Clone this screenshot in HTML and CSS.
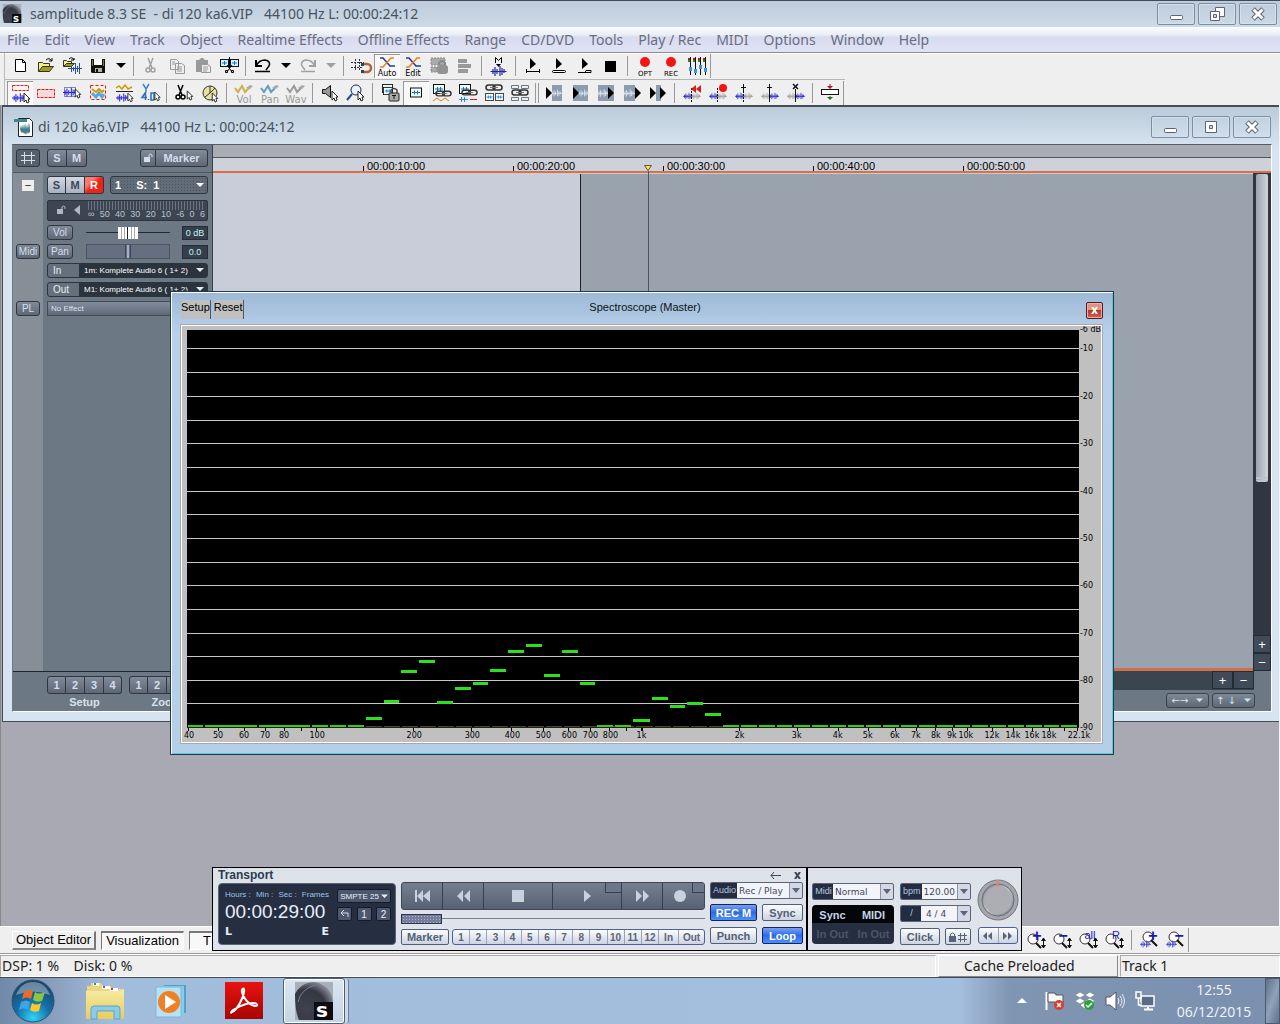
FILE: index.html
```html
<!DOCTYPE html>
<html lang="en">
<head>
<meta charset="utf-8">
<meta name="viewport" content="width=device-width, initial-scale=1">
<title>samplitude 8.3 SE</title>
<link rel="stylesheet" href="styles.css">
</head>
<body>
<svg class="defs" aria-hidden="true">
  <defs>
    <linearGradient id="g-red" x1="0" y1="0" x2="0" y2="1"><stop offset="0" stop-color="#e8130f"/><stop offset="1" stop-color="#a80503"/></linearGradient>
    <radialGradient id="g-orb" cx=".5" cy=".9" r=".9"><stop offset="0" stop-color="#2fd4f7"/><stop offset=".45" stop-color="#1470a8"/><stop offset="1" stop-color="#1c3f63"/></radialGradient>
    <linearGradient id="g-fold" x1="0" y1="0" x2="0" y2="1"><stop offset="0" stop-color="#f7eca6"/><stop offset="1" stop-color="#e8cc5c"/></linearGradient>
    <radialGradient id="g-sam" cx=".3" cy=".7" r=".85"><stop offset="0" stop-color="#3d424e"/><stop offset=".6" stop-color="#343843"/><stop offset=".9" stop-color="#8b909c"/><stop offset="1" stop-color="#e0e3e8"/></radialGradient>
    <linearGradient id="g-knob" x1="0" y1="0" x2="1" y2="1"><stop offset="0" stop-color="#76777c"/><stop offset=".5" stop-color="#c7c8cc"/><stop offset="1" stop-color="#77787d"/></linearGradient>
  </defs>
  <symbol id="wave" viewBox="0 0 16 10"><path d="M0 5.500h16M2.500 3v5M4.500 1v9M6.500 3v5M9.500 0v10M11.500 2v7M13.500 3v4" fill="none" stroke="currentColor" stroke-width="1.200"/></symbol>
  <symbol id="cursor" viewBox="0 0 8 12"><path d="M1 1v9l2-2 1 3 2-1-1-3h2z" fill="#fff" stroke="#222"/></symbol>
  <symbol id="chain" viewBox="0 0 18 8"><g fill="none" stroke="#333" stroke-width="1.500"><rect x="1" y="1" width="9" height="5" rx="2.500"/><rect x="8" y="1" width="9" height="5" rx="2.500"/></g><path d="M5 3.500h8" stroke="#777"/></symbol>
  <symbol id="box" viewBox="0 0 12 10"><rect x=".5" y=".5" width="11" height="9" fill="#eefcff" stroke="#111"/><path d="M2 5h8M4.500 3v4M7.500 3v4" stroke="#1672c8"/></symbol>
  <symbol id="caret" viewBox="0 0 10 6"><path d="M0 0h10L5 5z" fill="currentColor"/></symbol>

  <symbol id="i-new" viewBox="0 0 24 22"><path d="M7.500 4.500h7l3 3v9h-10zM14.500 4.500v3h3" fill="#fff" stroke="#000"/></symbol>
  <symbol id="i-open" viewBox="0 0 24 22"><path d="M4.500 16.500v-9h4l1 1h6v3" fill="#f6f08a" stroke="#332"/><path d="M4.500 16.500l4-5h11l-4 5z" fill="#a29b1c" stroke="#332"/><path d="M12 5q3-3 6 1m0-3v3h-3" fill="none" stroke="#000"/></symbol>
  <symbol id="i-import" viewBox="0 0 24 22"><path d="M3.500 11.500v-6h3l1 1h4v2" fill="#f6f08a" stroke="#332"/><path d="M3.500 11.500l3-3h8l-3 3z" fill="#a29b1c" stroke="#332"/><path d="M9 4q3-3 5 1m0-2v2h-3" fill="none" stroke="#000"/><path d="M8 13.500h14M11.500 11v6M13.500 12v4M15.500 8v11M17.500 11v6M19.500 8v11" stroke="#2650a8"/></symbol>
  <symbol id="i-save" viewBox="0 0 24 22"><path d="M5 4h14v14H6l-1-1z" fill="#111"/><path d="M6 5h1v6H6zM17 5h1v6h-1z" fill="#7d7d32"/><path d="M8 4h8v6H8z" fill="#fff"/><path d="M9 13h7v4H9z" fill="#b4b4a0"/><path d="M10 14h2v3h-2z" fill="#111"/></symbol>
  <symbol id="i-cut" viewBox="0 0 24 22"><path d="M9 3l4 10M14 3l-4 10" stroke="currentColor" stroke-width="1.500"/><g fill="none" stroke="currentColor" stroke-width="1.500"><circle cx="9" cy="15" r="2"/><circle cx="14" cy="15" r="2"/></g></symbol>
  <symbol id="i-copy" viewBox="0 0 24 22"><path d="M5.500 4.500h6l2 2v8h-8zM10.500 8.500h6l3 2v8h-9z" fill="#eee" stroke="#999"/><path d="M7 7h3M7 9h3M12 12h5M12 14h5M12 16h5" stroke="#999"/></symbol>
  <symbol id="i-paste" viewBox="0 0 24 22"><path d="M5 5h3l2-2h2l2 2h3v5H5v6z" fill="#999"/><path d="M5 5h6v12H5z" fill="#999"/><path d="M10.500 9.500h6l3 2v6h-9z" fill="#eee" stroke="#999"/><path d="M12 12h5M12 14h5M12 16h4" stroke="#999"/></symbol>
  <symbol id="i-cutobj" viewBox="0 0 24 22"><rect x="3.500" y="4.500" width="8" height="7" fill="#d5f4ff" stroke="#111"/><rect x="13.500" y="4.500" width="8" height="7" fill="#d5f4ff" stroke="#111"/><path d="M5 8h5M7.500 6v4M15 8h5M17.500 6v4" stroke="#1672c8"/><path d="M12.500 2v12M10 10l5 7M15 10l-5 7" stroke="#000"/><path d="M8.500 15.500h2v2h-2zM14.500 15.500h2v2h-2z" fill="none" stroke="#000"/></symbol>
  <symbol id="i-undo" viewBox="0 0 24 22"><path d="M5 5v6h6" fill="none" stroke="currentColor" stroke-width="2"/><path d="M5 11Q8 5 14 5q6 1 4 6l-3 4M4 16.500h15" fill="none" stroke="currentColor" stroke-width="1.500"/></symbol>
  <symbol id="i-redo" viewBox="0 0 24 22"><path d="M19 5v6h-6" fill="none" stroke="currentColor" stroke-width="2"/><path d="M19 11Q16 5 10 5q-6 1-4 6l3 4M5 16.500h14" fill="none" stroke="currentColor" stroke-width="1.500"/></symbol>
  <symbol id="i-grid" viewBox="0 0 24 22"><path d="M6.500 4v12M10.500 4v12M2 7.500h13M2 12.500h11" stroke="#333" stroke-dasharray="2 1"/><path d="M13 9h5a3.500 3.500 0 010 8h-5" fill="none" stroke="#b0633c" stroke-width="2.500"/><path d="M12 8h3v3h-3zM12 15h3v3h-3z" fill="#246"/></symbol>
  <symbol id="i-x" viewBox="0 0 24 22"><path d="M5 3h3l7 8h5" fill="none" stroke="#26389a" stroke-width="1.500"/><path d="M5 12h3l8-9h3" fill="none" stroke="#e8821e" stroke-width="1.500"/></symbol>
  <symbol id="i-lockobj" viewBox="0 0 24 22"><path d="M4 3h14v7H4zM4 12h6v5H4z" fill="#aaa" stroke="#888" stroke-dasharray="2 1"/><rect x="10" y="10" width="11" height="9" rx="3" fill="#929292"/><path d="M12 10V8q3-4 6 0v2" fill="none" stroke="#888" stroke-width="2"/></symbol>
  <symbol id="i-list" viewBox="0 0 24 22"><path d="M5 4h9v4H5zM5 9h13v4H5zM5 14h10v4H5z" fill="#999"/></symbol>
  <symbol id="i-m" viewBox="0 0 24 22"><path d="M8.500 8V2.500l3 3 3-3V8" fill="none" stroke="#000"/><path d="M9 9h5l-2.500 3z" fill="#000"/><use href="#wave" x="3" y="11" width="17" height="10" color="#2525a0"/></symbol>
  <symbol id="i-play1" viewBox="0 0 24 22"><path d="M9 3v11l6-5z"/><path d="M5 16.500h14M5.500 14v4M18.500 14v4" stroke="#000"/></symbol>
  <symbol id="i-play2" viewBox="0 0 24 22"><path d="M9 3v11l6-5z"/><rect x="5.500" y="15.500" width="13" height="2" rx="1" fill="#fff" stroke="#000"/></symbol>
  <symbol id="i-play3" viewBox="0 0 24 22"><path d="M9 3v11l6-5z"/><path d="M5 17.500h7l1-2h5v2h-6" fill="none" stroke="#000"/></symbol>
  <symbol id="i-stop" viewBox="0 0 24 22"><path d="M6 6h11v11H6z"/></symbol>
  <symbol id="i-dot" viewBox="0 0 24 22"><circle cx="12" cy="7" r="5" fill="#f41414"/></symbol>
  <symbol id="i-mixer" viewBox="0 0 24 22"><g stroke-width="2"><path d="M3 4h18" stroke="#b81818" stroke-dasharray="3 2"/><path d="M3 6h18" stroke="#178c1c" stroke-dasharray="3 2"/></g><path d="M5.500 2v18M10.500 2v18M15.500 2v18M20.500 2v18" stroke="#111"/><path d="M4 12h3v4H4zM9 14h3v4H9zM14 10h3v4h-3zM19 13h3v4h-3z" fill="#3c94e0"/></symbol>

  <symbol id="i-r1" viewBox="0 0 24 22"><path d="M4.500 3.500h16v5h-16z" fill="#fff0f0" stroke="#d81c1c" stroke-dasharray="3 1"/><use href="#wave" x="4" y="11" width="14" height="9" color="#2424e0"/><use href="#cursor" x="15" y="10" width="8" height="12"/></symbol>
  <symbol id="i-r2" viewBox="0 0 24 22"><path d="M3.500 7.500h17v8h-17z" fill="#f6dada" stroke="#d81c1c" stroke-dasharray="3 1"/></symbol>
  <symbol id="i-r3" viewBox="0 0 24 22"><rect x="4.500" y="5.500" width="11" height="9" fill="#f4f4ff" stroke="#88a"/><use href="#wave" x="3" y="5" width="14" height="10" color="#2424e0"/><use href="#cursor" x="14" y="6" width="8" height="11"/></symbol>
  <symbol id="i-r4" viewBox="0 0 24 22"><path d="M4.500 3.500h15v14h-15z" fill="#f8eeee" stroke="#d81c1c" stroke-dasharray="3 2"/><path d="M6 7l4 3 3-3 3 3 2-2" fill="none" stroke="#c8a000" stroke-width="2"/><path d="M6 11l4 4 3-4 3 4 2-3" fill="none" stroke="#58a8d8" stroke-width="3"/></symbol>
  <symbol id="i-r5" viewBox="0 0 24 22"><path d="M4 6l3-2 3 3 3-4 3 4 4-2" fill="none" stroke="#c8a000" stroke-width="1.500"/><path d="M4 9.500h17" stroke="#222"/><use href="#wave" x="4" y="11" width="13" height="9" color="#2424e0"/><use href="#cursor" x="15" y="10" width="7" height="11"/></symbol>
  <symbol id="i-r6" viewBox="0 0 24 22"><path d="M5 2l3 5 3-5M8 7v3" fill="none" stroke="#3c84cc" stroke-width="1.500"/><path d="M7.500 10.500L4 15.500h5M7.500 10v8M13 11h3v7h-3zM10.500 17v1" fill="none" stroke="#2c6cb8" stroke-width="1.500"/><use href="#cursor" x="16" y="9" width="7" height="11"/></symbol>
  <symbol id="i-cutc" viewBox="0 0 24 22"><use href="#i-cut" x="-3" y="0" width="24" height="22"/><use href="#cursor" x="14" y="8" width="8" height="11"/></symbol>
  <symbol id="i-scrub" viewBox="0 0 24 22"><circle cx="12" cy="11" r="7" fill="#e6e39c" stroke="#333"/><path d="M12 4v7l-5 4M12 11l5-5" stroke="#333" fill="none"/><use href="#cursor" x="13" y="10" width="8" height="11"/></symbol>
  <symbol id="i-env" viewBox="0 0 24 22"><path d="M3 6l3 4 4-6 3 6 4-4" fill="none" stroke="currentColor" stroke-width="2"/><path d="M14 6l4-3 3 1-3 3z" fill="#aaa"/></symbol>
  <symbol id="i-spk" viewBox="0 0 24 22"><path d="M4.500 7.500h3l5-4v12l-5-4h-3z" fill="#999" stroke="#111"/><use href="#cursor" x="13" y="8" width="8" height="12"/></symbol>
  <symbol id="i-zoomc" viewBox="0 0 24 22"><circle cx="12" cy="8" r="5" fill="#e8f4ff" stroke="#225"/><path d="M8 12l-5 6" stroke="#224a9c" stroke-width="2"/><use href="#cursor" x="13" y="8" width="8" height="12"/></symbol>
  <symbol id="i-boxlock" viewBox="0 0 24 22"><use href="#box" x="3" y="2" width="13" height="9"/><use href="#box" x="5" y="5" width="10" height="8"/><rect x="11" y="11" width="10" height="8" rx="1" fill="#aaa" stroke="#222"/><path d="M13 11V8q3-3 6 0v3" fill="none" stroke="#444" stroke-width="1.500"/><path d="M14 13.500h4M16 13v4" stroke="#111"/></symbol>
  <symbol id="i-box" viewBox="0 0 24 22"><use href="#box" x="6" y="5" width="12" height="11"/></symbol>
  <symbol id="i-ch1" viewBox="0 0 24 22"><use href="#box" x="3" y="2" width="12" height="10"/><use href="#chain" x="5" y="8" width="17" height="8"/><path d="M3 19l4-3 4 3 4-3 4 3" fill="none" stroke="#e07818"/></symbol>
  <symbol id="i-ch2" viewBox="0 0 24 22"><use href="#box" x="3" y="2" width="12" height="10"/><use href="#chain" x="5" y="7" width="17" height="8"/><path d="M3 17.500h9M5.500 15v5M8.500 15v5" stroke="#2c84e0"/><path d="M14 17.500h7" stroke="#d81c1c"/></symbol>
  <symbol id="i-ch3" viewBox="0 0 24 22"><use href="#chain" x="3" y="2" width="18" height="8"/><use href="#box" x="3" y="11" width="9" height="8"/><use href="#box" x="13" y="11" width="9" height="8"/></symbol>
  <symbol id="i-ch4" viewBox="0 0 24 22"><g fill="none" stroke="#678"><path d="M3.500 3.500h7v3h-7zM13.500 3.500h7v3h-7zM3.500 15.500h7v3h-7zM13.500 15.500h7v3h-7z"/></g><use href="#chain" x="3" y="7" width="18" height="8"/></symbol>
  <symbol id="i-p1" viewBox="0 0 24 22"><path d="M10 3h10v16H10z" fill="#8c9cb0"/><use href="#wave" x="9" y="6" width="11" height="10" color="#dde6ee"/><path d="M4 5v12l6-6z"/></symbol>
  <symbol id="i-p2" viewBox="0 0 24 22"><path d="M5 3h15v16H5z" fill="#8c9cb0"/><use href="#wave" x="10" y="6" width="11" height="10" color="#dde6ee"/><path d="M5 5v12l6-6z"/></symbol>
  <symbol id="i-p3" viewBox="0 0 24 22"><path d="M4 3h16v16H4z" fill="#8c9cb0"/><use href="#wave" x="3" y="6" width="12" height="10" color="#dde6ee"/><path d="M14 5v12l6-6z"/></symbol>
  <symbol id="i-p4" viewBox="0 0 24 22"><path d="M4 3h11v16H4z" fill="#8c9cb0"/><use href="#wave" x="3" y="6" width="12" height="10" color="#dde6ee"/><path d="M15 5v12l6-6z"/></symbol>
  <symbol id="i-p5" viewBox="0 0 24 22"><path d="M10 3h5v16h-5z" fill="#8c9cb0"/><path d="M4 5v12l6-6zM14 5v12l6-6z"/></symbol>
  <symbol id="i-wv" viewBox="0 0 24 22"><use href="#wave" x="3" y="9" width="10" height="10" color="#1818d0"/><use href="#wave" x="11" y="9" width="10" height="10" color="#999"/><path d="M11.500 6v14" stroke="#111" stroke-dasharray="2 1"/></symbol>
  <symbol id="i-wv2" viewBox="0 0 24 22"><use href="#wave" x="3" y="9" width="10" height="10" color="#999"/><use href="#wave" x="11" y="9" width="10" height="10" color="#1818d0"/><path d="M11.500 7v13" stroke="#111"/></symbol>
  <symbol id="i-w1" viewBox="0 0 24 22"><use href="#i-wv" width="24" height="22"/><path d="M11 7l5-4v8zM16 7l5-4v8z" fill="#d81c1c"/></symbol>
  <symbol id="i-w2" viewBox="0 0 24 22"><use href="#i-wv" width="24" height="22"/><circle cx="17" cy="6" r="4" fill="#f41414"/></symbol>
  <symbol id="i-w3" viewBox="0 0 24 22"><use href="#i-wv" width="24" height="22"/><path d="M11.500 2v7M9 5.500h5" stroke="#111"/></symbol>
  <symbol id="i-w4" viewBox="0 0 24 22"><use href="#i-wv2" width="24" height="22"/><path d="M11.500 2v7M9 5.500h5" stroke="#111"/></symbol>
  <symbol id="i-w5" viewBox="0 0 24 22"><use href="#i-wv2" width="24" height="22"/><path d="M9 2l5 5M14 2l-5 5" stroke="#111" stroke-width="1.500"/></symbol>
  <symbol id="i-out" viewBox="0 0 24 22"><rect x="3.500" y="7.500" width="17" height="5" fill="#fff" stroke="#111"/><path d="M12 2v4" stroke="#c01818"/><path d="M9 4h6l-3 3z" fill="#c01818"/><path d="M12 14v3" stroke="#187818"/><path d="M9 15h6l-3 3z" fill="#187818"/></symbol>
  <symbol id="i-mag" viewBox="0 0 24 22"><circle cx="8" cy="10" r="5" fill="#fff" stroke="#333"/><path d="M11 14l5 5" stroke="#111" stroke-width="2"/><path d="M18.500 9v10M16.500 12l2-3 2 3M16.500 16l2 3 2-3" fill="#111" stroke="#111"/></symbol>
  <symbol id="i-magw" viewBox="0 0 24 22"><circle cx="11" cy="8" r="5" fill="#fff" stroke="#333"/><path d="M14 11l6 6" stroke="#111" stroke-width="2"/><use href="#wave" x="3" y="10" width="11" height="10" color="#4040d8"/></symbol>

  <symbol id="w-min" viewBox="0 0 20 18"><rect x="4.500" y="10.500" width="12" height="4" rx="1" fill="#fff" stroke="#5a6677"/></symbol>
  <symbol id="w-restore" viewBox="0 0 20 18"><path d="M8.500 2.500h9v9h-9z" fill="#fff" stroke="#5a6677"/><path d="M3.500 6.500h9v9h-9z" fill="#fff" stroke="#5a6677"/><path d="M6.500 9.500h3v3h-3z" fill="#cdd8e4" stroke="#5a6677"/></symbol>
  <symbol id="w-max" viewBox="0 0 20 18"><path d="M4.500 3.500h11v11h-11z" fill="#fff" stroke="#5a6677"/><path d="M8.500 7.500h3v3h-3z" fill="#cdd8e4" stroke="#5a6677"/></symbol>
  <symbol id="w-close" viewBox="0 0 20 18"><path d="M5 4l10 10M15 4L5 14" stroke="#5a6677" stroke-width="5"/><path d="M5.500 4.500l9 9M14.500 4.500l-9 9" stroke="#fff" stroke-width="3"/></symbol>
  <symbol id="lock" viewBox="0 0 10 10"><path d="M1 4h6v5H1z" fill="currentColor"/><path d="M6 4V2q2-2 3 0v2" fill="none" stroke="currentColor"/></symbol>
  <symbol id="sam" viewBox="0 0 38 38"><path d="M0 0h38v38H0z" fill="#a9afba"/><path d="M0 12Q6 0 20 0q18 4 18 22v16H4Q0 30 0 12z" fill="url(#g-sam)"/><path d="M3 20Q6 7 20 3" stroke="#777d8a" fill="none"/><path d="M19 20h19v18H19z" fill="#0c0d10"/></symbol>
</svg>

<header class="titlebar">
  <svg class="app-icon" width="20" height="19" viewBox="0 0 38 38" aria-hidden="true"><use href="#sam" width="38" height="38"/><text class="sam-s" x="21" y="35">s</text></svg>
  <h1 class="win-title">samplitude 8.3 SE&nbsp; - di 120 ka6.VIP&nbsp;&nbsp; 44100 Hz L: 00:00:24:12</h1>
  <div class="win-buttons">
    <button aria-label="Minimize"><svg><use href="#w-min"/></svg></button>
    <button aria-label="Restore"><svg><use href="#w-restore"/></svg></button>
    <button aria-label="Close"><svg><use href="#w-close"/></svg></button>
  </div>
</header>

<nav class="menubar">
  <a href="#">File</a><a href="#">Edit</a><a href="#">View</a><a href="#">Track</a><a href="#">Object</a><a href="#">Realtime Effects</a><a href="#">Offline Effects</a><a href="#">Range</a><a href="#">CD/DVD</a><a href="#">Tools</a><a href="#">Play / Rec</a><a href="#">MIDI</a><a href="#">Options</a><a href="#">Window</a><a href="#">Help</a>
</nav>

<div class="toolbars">
  <div class="toolbar">
    <button aria-label="New"><svg><use href="#i-new"/></svg></button>
    <button aria-label="Open"><svg><use href="#i-open"/></svg></button>
    <button aria-label="Import audio"><svg><use href="#i-import"/></svg></button>
    <button aria-label="Save"><svg><use href="#i-save"/></svg></button>
    <button class="drop" aria-label="Save options"><svg class="caret"><use href="#caret"/></svg></button>
    <i class="sep"></i>
    <button class="off" aria-label="Cut"><svg><use href="#i-cut"/></svg></button>
    <button aria-label="Copy"><svg><use href="#i-copy"/></svg></button>
    <button aria-label="Paste"><svg><use href="#i-paste"/></svg></button>
    <button aria-label="Split objects"><svg><use href="#i-cutobj"/></svg></button>
    <i class="sep"></i>
    <button aria-label="Undo"><svg><use href="#i-undo"/></svg></button>
    <button class="drop" aria-label="Undo list"><svg class="caret"><use href="#caret"/></svg></button>
    <button class="off" aria-label="Redo"><svg><use href="#i-redo"/></svg></button>
    <button class="drop off" aria-label="Redo list"><svg class="caret"><use href="#caret"/></svg></button>
    <i class="sep"></i>
    <button aria-label="Snap to grid"><svg><use href="#i-grid"/></svg></button>
    <button class="cap on"><svg><use href="#i-x"/></svg><span>Auto</span></button>
    <button class="cap"><svg><use href="#i-x"/></svg><span>Edit</span></button>
    <button aria-label="Lock object"><svg><use href="#i-lockobj"/></svg></button>
    <button aria-label="Object list"><svg><use href="#i-list"/></svg></button>
    <i class="sep"></i>
    <button aria-label="Marker"><svg><use href="#i-m"/></svg></button>
    <i class="sep"></i>
    <button aria-label="Play once"><svg><use href="#i-play1"/></svg></button>
    <button aria-label="Play loop"><svg><use href="#i-play2"/></svg></button>
    <button aria-label="Play into loop"><svg><use href="#i-play3"/></svg></button>
    <button aria-label="Stop"><svg><use href="#i-stop"/></svg></button>
    <i class="sep"></i>
    <button class="cap tiny"><svg><use href="#i-dot"/></svg><span>OPT</span></button>
    <button class="cap tiny"><svg><use href="#i-dot"/></svg><span>REC</span></button>
    <button aria-label="Mixer"><svg><use href="#i-mixer"/></svg></button>
    <i class="end"></i>
  </div>
  <div class="toolbar">
    <button class="on" aria-label="Universal mode"><svg><use href="#i-r1"/></svg></button>
    <button aria-label="Range mode"><svg><use href="#i-r2"/></svg></button>
    <button aria-label="Object mode"><svg><use href="#i-r3"/></svg></button>
    <button aria-label="Curve range mode"><svg><use href="#i-r4"/></svg></button>
    <button aria-label="Object curve mode"><svg><use href="#i-r5"/></svg></button>
    <button aria-label="Draw volume"><svg><use href="#i-r6"/></svg></button>
    <i class="sep"></i>
    <button aria-label="Cut mode"><svg><use href="#i-cutc"/></svg></button>
    <button aria-label="Scrub mode"><svg><use href="#i-scrub"/></svg></button>
    <i class="sep"></i>
    <button class="cap grey gold"><svg><use href="#i-env"/></svg><span>Vol</span></button>
    <button class="cap grey blue"><svg><use href="#i-env"/></svg><span>Pan</span></button>
    <button class="cap grey"><svg><use href="#i-env"/></svg><span>Wav</span></button>
    <i class="sep"></i>
    <button aria-label="Listen"><svg><use href="#i-spk"/></svg></button>
    <button aria-label="Zoom mode"><svg><use href="#i-zoomc"/></svg></button>
    <i class="sep"></i>
    <button aria-label="Lock"><svg><use href="#i-boxlock"/></svg></button>
    <button class="on" aria-label="Single object"><svg><use href="#i-box"/></svg></button>
    <button aria-label="Link curves"><svg><use href="#i-ch1"/></svg></button>
    <button aria-label="Link until silence"><svg><use href="#i-ch2"/></svg></button>
    <button aria-label="Link track"><svg><use href="#i-ch3"/></svg></button>
    <button aria-label="Link all"><svg><use href="#i-ch4"/></svg></button>
    <i class="sep double"></i>
    <button aria-label="Play to start"><svg><use href="#i-p1"/></svg></button>
    <button aria-label="Play from start"><svg><use href="#i-p2"/></svg></button>
    <button aria-label="Play to end"><svg><use href="#i-p3"/></svg></button>
    <button aria-label="Play from end"><svg><use href="#i-p4"/></svg></button>
    <button aria-label="Play over cut"><svg><use href="#i-p5"/></svg></button>
    <i class="sep"></i>
    <button aria-label="Play range"><svg><use href="#i-w1"/></svg></button>
    <button aria-label="Record range"><svg><use href="#i-w2"/></svg></button>
    <button aria-label="Set start"><svg><use href="#i-w3"/></svg></button>
    <button aria-label="Set end"><svg><use href="#i-w4"/></svg></button>
    <button aria-label="Clear range"><svg><use href="#i-w5"/></svg></button>
    <i class="sep"></i>
    <button aria-label="Bounce"><svg><use href="#i-out"/></svg></button>
    <i class="end"></i>
  </div>
</div>

<main class="desktop">
  <section class="window project">
    <header class="project-title">
      <svg width="20" height="20" viewBox="0 0 20 20" aria-hidden="true"><path d="M4.500 1.500h11l3 3v15h-14z" fill="#fff" stroke="#222"/><path d="M0 2h13v3H0z" fill="#3b8893"/><path d="M6 12l1-4 1 4 1-5 1 5 1-6 1 6 1-5 1 5 1-7 1 7v4l-1-1-1 2-1-2-1 3-1-2-1 1-1-2-1 1-1-1z" fill="#437f90"/></svg>
      <h2 class="win-title">di 120 ka6.VIP&nbsp;&nbsp; 44100 Hz L: 00:00:24:12</h2>
      <div class="win-buttons">
        <button aria-label="Minimize"><svg><use href="#w-min"/></svg></button>
        <button aria-label="Maximize"><svg><use href="#w-max"/></svg></button>
        <button aria-label="Close"><svg><use href="#w-close"/></svg></button>
      </div>
    </header>
    <div class="project-body">
      <aside class="tracks">
        <div class="track-top">
          <button class="key grid-key" aria-label="Grid"><svg width="14" height="12"><path d="M0 3.500h14M0 8.500h14M3.500 0v12M10.500 0v12" stroke="#d5dee6"/></svg></button>
          <div class="keys solo"><button>S</button><button>M</button></div>
          <div class="keys marker"><button aria-label="Unlock"><svg width="10" height="10"><use href="#lock"/></svg></button><button>Marker</button></div>
        </div>
        <div class="strip">
          <div class="side"><button class="fold">−</button></div>
          <div class="row head">
            <div class="keys smr"><button>S</button><button>M</button><button class="rec">R</button></div>
            <button class="track-name"><b>1</b><b>S:&nbsp; 1</b><svg width="8" height="5"><use href="#caret"/></svg></button>
          </div>
          <div class="side"></div>
          <div class="row">
            <div class="meter">
              <svg width="10" height="10" aria-hidden="true"><use href="#lock"/></svg>
              <svg width="8" height="10" aria-hidden="true"><path d="M7 0v10L1 5z" fill="#aeb8c4"/></svg>
              <div class="scale"><i></i><p><span>∞</span><span>50</span><span>40</span><span>30</span><span>20</span><span>10</span><span>-6</span><span>0</span><span>6</span></p></div>
            </div>
          </div>
          <div class="side"></div>
          <div class="row"><button class="key wide">Vol</button><input class="fader" type="range" min="0" max="100" value="50" aria-label="Volume"><output>0 dB</output></div>
          <div class="side"><button class="key">Midi</button></div>
          <div class="row"><button class="key wide">Pan</button><input class="fader pan" type="range" min="0" max="100" value="50" aria-label="Pan"><output>0.0</output></div>
          <div class="side"></div>
          <div class="row"><button class="io"><span>In</span><b>1m: Komplete Audio 6 ( 1+ 2)</b><svg width="8" height="5"><use href="#caret"/></svg></button></div>
          <div class="side"></div>
          <div class="row"><button class="io"><span>Out</span><b>M1: Komplete Audio 6 ( 1+ 2)</b><svg width="8" height="5"><use href="#caret"/></svg></button></div>
          <div class="side"><button class="key">PL</button></div>
          <div class="row"><button class="fx">No Effect</button></div>
        </div>
        <div class="track-foot">
          <div><div class="keys nums"><button>1</button><button>2</button><button>3</button><button>4</button></div><span>Setup</span></div>
          <div><div class="keys nums"><button>1</button><button>2</button><button>3</button><button>4</button></div><span>Zoom</span></div>
        </div>
      </aside>
      <div class="arrange">
        <div class="overview"></div>
        <div class="ruler"><span></span><span>00:00:10:00</span><span>00:00:20:00</span><span>00:00:30:00</span><span>00:00:40:00</span><span>00:00:50:00</span></div>
        <div class="lane">
          <div class="view"><div class="clip"></div></div>
          <div class="vscroll"><div class="thumb"></div><div class="grow"></div><button>+</button><button>−</button></div>
        </div>
        <div class="hscroll"><button>+</button><button>−</button></div>
        <div class="zoomrow"><button class="zk"><span>←→</span><svg width="7" height="5"><use href="#caret"/></svg></button><button class="zk"><span>↑ ↓</span><svg width="7" height="5"><use href="#caret"/></svg></button></div>
        <div class="playhead"><svg width="9" height="7"><path d="M.5.500h7L4 5.500z" fill="#ffee30" stroke="#554"/></svg></div>
      </div>
    </div>
  </section>

  <section class="window scope">
    <header class="scope-head">
      <div class="scope-menu"><button>Setup</button><button>Reset</button></div>
      <h2>Spectroscope (Master)</h2>
      <button class="close" aria-label="Close"><svg width="7" height="7"><path d="M1 0l5 7M6 0L1 7" stroke="#fff" stroke-width="2"/></svg></button>
    </header>
    <div class="plate">
      <svg viewBox="182 326 918 415" role="img" aria-label="Spectrum">
        <path d="M187 330h891v397H187z"/>
        <path d="M187 348.500h891M187 372.500h891M187 396.500h891M187 420.500h891M187 443.500h891M187 467.500h891M187 491.500h891M187 514.500h891M187 538.500h891M187 562.500h891M187 585.500h891M187 609.500h891M187 633.500h891M187 656.500h891M187 680.500h891M187 703.500h891" stroke="#c8c8c8"/>
        <path d="M187 727.500h891" stroke="#222"/>
        <path d="M366 726.500h356" stroke="#4c4818" stroke-dasharray="16 2"/>
        <path d="M188 728v3M218.500 728v3M244.500 728v3M265.500 728v3M284.500 728v3M301.500 728v3M316.500 728v3M413.500 728v3M471.500 728v3M511.500 728v3M543.500 728v3M568.500 728v3M590.500 728v3M609.500 728v3M626.500 728v3M641.500 728v3M738.500 728v3M796.500 728v3M837.500 728v3M867.500 728v3M894.500 728v3M915.500 728v3M934.500 728v3M951.500 728v3M966.500 728v3M991.500 728v3M1012.500 728v3M1031.500 728v3M1048.500 728v3M1063.500 728v3M1077 728v3" stroke="#000"/>
        <path d="M188 726h15M205 726h52M259 726h51M312 726h16M330 726h16M348 726h16M597 726h16M615 726h16M722 726h16M740 726h16M758 726h16M776 726h15M793 726h16M811 726h16M829 726h16M847 726h16M865 726h15M882 726h16M900 726h16M918 726h16M936 726h16M954 726h15M971 726h16M989 726h16M1007 726h16M1025 726h16M1043 726h15M1060 726h16" stroke="#41c80c" stroke-width="2"/>
        <path d="M366 718.500h16M384 701.500h15M401 671.500h16M419 661.500h16M437 702.500h16M455 688.500h16M473 683.500h15M490 670.500h16M508 651.500h16M526 645.500h16M544 675.500h16M562 651.500h16M580 683.500h15M633 720.500h16M651 698.500h16M669 706.500h15M686 703.500h16M704 714.500h16" stroke="#2de01c" stroke-width="3"/>
        <g class="db"><text x="1079" y="332">-6 dB</text><text x="1079" y="351">-10</text><text x="1079" y="399">-20</text><text x="1079" y="446">-30</text><text x="1079" y="494">-40</text><text x="1079" y="541">-50</text><text x="1079" y="588">-60</text><text x="1079" y="636">-70</text><text x="1079" y="683">-80</text><text x="1079" y="730">-90</text></g>
        <g class="hz"><text x="189" y="738">40</text><text x="218" y="738">50</text><text x="244" y="738">60</text><text x="265" y="738">70</text><text x="284" y="738">80</text><text x="317" y="738">100</text><text x="414" y="738">200</text><text x="472" y="738">300</text><text x="512" y="738">400</text><text x="543" y="738">500</text><text x="569" y="738">600</text><text x="590" y="738">700</text><text x="610" y="738">800</text><text x="641" y="738">1k</text><text x="739" y="738">2k</text><text x="796" y="738">3k</text><text x="837" y="738">4k</text><text x="867" y="738">5k</text><text x="894" y="738">6k</text><text x="915" y="738">7k</text><text x="935" y="738">8k</text><text x="951" y="738">9k</text><text x="965" y="738">10k</text><text x="991" y="738">12k</text><text x="1012" y="738">14k</text><text x="1031" y="738">16k</text><text x="1048" y="738">18k</text><text x="1078" y="738">22.1k</text></g>
      </svg>
    </div>
  </section>

  <section class="window transport">
    <div class="t-left">
      <header class="t-head"><h2>Transport</h2><button aria-label="Dock"><svg width="12" height="7"><path d="M4 0L1 3.500 4 7M1 3.500h10" fill="none" stroke="#445"/></svg></button><button aria-label="Close"><svg width="7" height="7"><path d="M1 0l5 7M6 0L1 7" stroke="#445" stroke-width="2"/></svg></button></header>
      <div class="t-body">
        <div class="lcd">
          <div class="lcd-main"><p class="units"><span>Hours :</span><span>Min :</span><span>Sec :</span><span>Frames</span></p><p class="time">00:00:29:00</p><p class="le"><b>L</b><b>E</b></p></div>
          <div class="lcd-side">
            <button class="smpte">SMPTE 25<svg width="7" height="5"><use href="#caret"/></svg></button>
            <div><button aria-label="Back"><svg width="9" height="8"><path d="M4 0L1 3l3 3M1 3h7v4" fill="none" stroke="#cfdaf0"/></svg></button><button>1</button><button>2</button></div>
          </div>
        </div>
        <div class="deck">
          <div class="deck-keys">
            <button aria-label="To start"><svg width="15" height="12"><path d="M0 0h2v12H0zM8 0v12L2 6zM15 0v12L8 6z"/></svg></button>
            <button aria-label="Rewind"><svg width="13" height="12"><path d="M6 0v12L0 6zM13 0v12L7 6z"/></svg></button>
            <button class="big" aria-label="Stop"><svg width="12" height="12"><path d="M0 0h12v12H0z"/></svg></button>
            <button class="big notch" aria-label="Play"><svg width="7" height="12"><path d="M0 0v12l7-6z"/></svg></button>
            <button aria-label="Forward"><svg width="13" height="12"><path d="M0 0v12l6-6zM7 0v12l6-6z"/></svg></button>
            <button class="notch small" aria-label="Record"><svg width="12" height="12"><circle cx="6" cy="6" r="6"/></svg></button>
          </div>
          <input class="scrub" type="range" min="0" max="100" value="0" aria-label="Position">
          <div class="marks"><button class="lt mk">Marker</button><div class="seg"><button>1</button><button>2</button><button>3</button><button>4</button><button>5</button><button>6</button><button>7</button><button>8</button><button>9</button><button>10</button><button>11</button><button>12</button><button class="in">In</button><button class="out">Out</button></div></div>
        </div>
        <div class="modes">
          <label class="combo span2"><span>Audio</span><select><option>Rec / Play</option></select></label>
          <button class="lt hot">REC M</button><button class="lt">Sync</button>
          <button class="lt">Punch</button><button class="lt hot">Loop</button>
        </div>
      </div>
    </div>
    <div class="t-right">
      <div class="midi">
        <label class="combo"><span>Midi</span><select><option>Normal</option></select></label>
        <div class="midi-lcd"><b>Sync</b><b>MIDI</b><span>In Out</span><span>In Out</span></div>
      </div>
      <div class="tempo">
        <label class="combo span2"><span>bpm</span><select><option>120.00</option></select></label>
        <label class="combo meter-combo span2"><span>/</span><select><option>4 / 4</option></select></label>
        <button class="lt">Click</button><button class="lt" aria-label="Lock grid"><svg width="18" height="10"><path d="M0 4h7v6H0z" fill="#566578"/><path d="M1.500 4V2q2-2 4 0v2M9 3.500h9M9 7.500h9M11.500 1v9M15.500 1v9" fill="none" stroke="#566578"/></svg></button>
      </div>
      <div class="jog">
        <svg width="42" height="42" viewBox="0 0 42 42" role="img" aria-label="Jog wheel"><circle cx="21" cy="21" r="20" fill="#a5a6ab" stroke="#77787d"/><circle cx="21" cy="21" r="16" fill="url(#g-knob)" stroke="#6b6c70"/><circle cx="21" cy="21" r="14" fill="#adaeb3"/><path d="M20.500 1v7" stroke="#e88080" stroke-width="2"/></svg>
        <div class="seg jk"><button aria-label="Nudge back"><svg width="10" height="8"><path d="M4 0v8L0 4zM9 0v8L5 4z"/></svg></button><button aria-label="Nudge forward"><svg width="10" height="8"><path d="M0 0v8l4-4zM5 0v8l4-4z"/></svg></button></div>
      </div>
    </div>
  </section>
</main>

<div class="dock">
  <button class="tab">Object Editor</button><button class="tab down">Visualization</button><button class="tab down">T</button>
  <div class="dock-tools toolbar">
    <button class="ov"><svg><use href="#i-mag"/></svg><b>+</b></button>
    <button class="ov"><svg><use href="#i-mag"/></svg><b>−</b></button>
    <button class="ov thin"><svg><use href="#i-mag"/></svg><b>all</b></button>
    <button class="ov thin"><svg><use href="#i-mag"/></svg><b>R</b></button>
    <i class="sep"></i>
    <button class="ov wav"><svg><use href="#i-magw"/></svg><b>+</b></button>
    <button class="ov wav"><svg><use href="#i-magw"/></svg><b>−</b></button>
    <i class="end"></i>
  </div>
</div>

<div class="status"><span class="main">DSP: 1 %&nbsp;&nbsp;&nbsp; Disk: 0 %</span><span class="cache">Cache Preloaded</span><span class="trk">Track 1</span></div>

<footer class="taskbar">
  <button class="start" aria-label="Start"><svg width="44" height="44" viewBox="0 0 44 44"><circle cx="22" cy="22" r="21" fill="url(#g-orb)" stroke="#31506e"/><path d="M5 16Q10 3 22 3t17 13q-17-7-34 0z" fill="#fff" opacity=".35"/><path d="M13 13q5-4 9-1l-2 8q-4-3-9 0z" fill="#ee6a2a"/><path d="M24 13q4 3 10 0l-3 9q-5 2-9-1z" fill="#8cc63e"/><path d="M10 23q5-3 9 0l-2 8q-4-3-9 0z" fill="#3fa4e4"/><path d="M21 24q4 3 9 0l-2 8q-5 2-9-1z" fill="#fbc82e"/></svg></button>
  <button aria-label="Explorer"><svg width="40" height="40" viewBox="0 0 40 40"><path d="M2 5h4V2h10l2 3h8v3h12v28H2z" fill="#ecd683"/><path d="M8 2h6v3H8zM17 5h8v3h-8zM25 7h8v3h-8z" fill="#fff"/><path d="M9 2h2v2H9z" fill="#3a9f3a"/><path d="M18 5h2v2h-2z" fill="#3a72c8"/><path d="M26 7h2v2h-2z" fill="#c83a3a"/><path d="M1 10h34l4-2v30H1z" fill="url(#g-fold)"/><path d="M6 38V28q0-3 3-3h23q3 0 3 3v10h-6v-8H12v8z" fill="#8ccbe8" stroke="#5aa5cc"/></svg></button>
  <button aria-label="Media player"><svg width="34" height="36" viewBox="0 0 34 36"><path d="M9 2h22v28H9z" fill="#4ea2cc"/><path d="M5 3h24v29H5z" fill="#8ccbe4"/><path d="M1 4h25v30H1z" fill="#b8e2f2" stroke="#78b8d8"/><circle cx="14" cy="19" r="11" fill="#f08024"/><path d="M10 12v14l11-7z" fill="#fff"/></svg></button>
  <button aria-label="Adobe Reader"><svg width="38" height="38" viewBox="0 0 38 38"><path d="M0 0h38v37H0z" fill="url(#g-red)"/><path d="M7 30c5-2 11-13 12-20 1-5-3-4-2 0 1 6 7 13 13 14 4 0 2-3-2-3-7 0-13 3-18 6-4 2-5 5-3 3z" fill="none" stroke="#fff" stroke-width="2"/></svg></button>
  <button class="active" aria-label="Samplitude"><svg width="38" height="38" viewBox="0 0 38 38"><use href="#sam" width="38" height="38"/><text class="sam-s" x="21" y="35">s</text></svg></button>
  <div class="tray">
    <button aria-label="Show hidden icons"><svg width="10" height="6"><path d="M0 5h10L5 0z" fill="#fff"/></svg></button>
    <button aria-label="Action center"><svg width="20" height="20" viewBox="0 0 20 20"><path d="M1.500 1v18" stroke="#fff" stroke-width="2"/><path d="M3 2h7l1 2h7v8h-7l-1-1H3z" fill="#f6f8fa" stroke="#556"/><circle cx="14" cy="14" r="5" fill="#dc3a28"/><path d="M12 12l4 4M16 12l-4 4" stroke="#fff" stroke-width="1.500"/></svg></button>
    <button aria-label="Dropbox"><svg width="20" height="20" viewBox="0 0 20 20"><path d="M5 1l5 3-5 3-5-3zM15 1l5 3-5 3-5-3zM5 7l5 3-5 3-5-3zM15 7l5 3-5 3-5-3zM5 14l5-3 5 3-5 4z" fill="#fff" stroke="#68788c" stroke-width=".6"/><circle cx="14" cy="14" r="5" fill="#2ca03a"/><path d="M11 14l2 2 4-4" fill="none" stroke="#fff" stroke-width="1.500"/></svg></button>
    <button aria-label="Volume"><svg width="20" height="20" viewBox="0 0 20 20"><path d="M1 6h4l6-5v18l-6-5H1z" fill="#fff" stroke="#556"/><path d="M13 7q2 3 0 6M15 5q4 5 0 10M17 3q5 7 0 14" fill="none" stroke="#e8eef4"/></svg></button>
    <button aria-label="Network"><svg width="20" height="20" viewBox="0 0 20 20"><path d="M6 5h13v10H6z" fill="#5a6c84" stroke="#fff" stroke-width="1.500"/><path d="M9 18.500h9M13 16v2" stroke="#fff" stroke-width="2"/><path d="M1 1h5v6H1zM3.500 7v7h3" fill="#7c8ca0" stroke="#fff" stroke-width="1.500"/></svg></button>
    <time datetime="2015-12-06T12:55"><span>12:55</span><span>06/12/2015</span></time>
  </div>
  <button class="peek" aria-label="Show desktop"></button>
</footer>
</body>
</html>
```
FILE: styles.css
```css
* { box-sizing: border-box; }
body { margin: 0; min-height: 100vh; display: flex; flex-direction: column; background: #a8a9b2; font-family: "Liberation Sans", Arial, sans-serif; font-size: 11px; color: #000; overflow-x: hidden; }
button { font: inherit; color: inherit; margin: 0; padding: 0; border: 0; background: none; display: flex; align-items: center; justify-content: center; white-space: nowrap; }
h1, h2, p { margin: 0; font-weight: normal; font-size: inherit; }
svg { display: block; flex: none; }
.defs { position: absolute; width: 0; height: 0; }
.sam-s { font: bold 20px "DejaVu Sans", sans-serif; fill: #fff; }

.titlebar { height: 27px; flex: none; display: flex; align-items: center; gap: 8px; padding: 0 3px 1px 2px; border-top: 1px solid #444b58; background: linear-gradient(#bdcbdb, #cddbe8); }
.win-title { flex: 1; font: 14px/20px "Noto Sans", sans-serif; color: #47525e; white-space: nowrap; }
.win-buttons { display: flex; gap: 3px; }
.win-buttons button { width: 38px; height: 22px; border: 1px solid #7b8ea6; border-radius: 2px; box-shadow: inset 0 0 0 1px #d5e0ea; }
.win-buttons svg { width: 20px; height: 18px; }

.menubar { height: 25px; flex: none; display: flex; align-items: center; gap: 15px; padding: 0 7px; background: linear-gradient(#fbfcfe 0, #e9edf6 8px, #d9dcef 10px, #dfe3f4 100%); }
.menubar a { font: 14px/22px "Noto Sans", sans-serif; color: #686e80; text-decoration: none; white-space: nowrap; }

.toolbars { flex: none; height: 53px; background: #efefef; border-top: 1px solid #8a8c94; box-shadow: inset 0 1px #fff; }
.toolbar { display: flex; align-items: center; height: 26px; }
.toolbars .toolbar + .toolbar { border-top: 1px solid #b4b4b4; width: 841px; }
.toolbars .toolbar { border-left: 1px solid #bbb; margin-left: 4px; padding-left: 2px; }
.toolbar button { width: 26px; height: 24px; position: relative; flex: none; }
.toolbar button svg { width: 24px; height: 22px; }
.toolbar .drop { width: 19px; }
.toolbar .drop svg { width: 10px; height: 6px; }
.toolbar .off { color: #a0a0a0; }
.toolbar .on { background: #f8f8f8; box-shadow: inset 1px 1px #999, inset -1px -1px #fff; }
.toolbar .cap span { position: absolute; left: 0; right: 0; bottom: 0; text-align: center; font: 8px/8px "DejaVu Sans", sans-serif; }
.toolbar .tiny span { font-size: 7px; }
.toolbar .grey { color: #999; }
.toolbar .grey span { font-size: 10px; line-height: 10px; }
.toolbar .gold svg { color: #cbb04c; }
.toolbar .blue svg { color: #5f9cc4; }
.sep { width: 8px; height: 20px; flex: none; background: linear-gradient(#999, #999) 3px 0 / 1px 100% no-repeat; }
.double { background: linear-gradient(#999, #999) 2px 0 / 1px 100% no-repeat, linear-gradient(#999, #999) 5px 0 / 1px 100% no-repeat; }
.end { width: 1px; height: 24px; background: #999; }

.desktop { position: relative; flex: 1 0 821px; border-left: 1px solid #888; border-right: 1px solid #f4f4f8; background: #a8a9b2; }
.window { position: absolute; display: flex; flex-direction: column; }
.project { left: 1px; right: 0; top: 0; height: 617px; padding: 2px 7px 9px 9px; background: linear-gradient(#bccbd9, #d6e4f0 40px, #d6e3f0); border: 1px solid #444c55; border-top-width: 2px; border-right: 0; }
.project-title { height: 35px; flex: none; display: flex; align-items: center; gap: 4px; padding: 0 1px 0 2px; }
.project-body { flex: 1; display: flex; min-height: 0; border-top: 1px solid #555c66; border-left: 1px solid #707884; border-right: 1px solid #fff; border-bottom: 1px solid #fff; }

.tracks { width: 200px; flex: none; display: flex; flex-direction: column; background: #6c7883; border-right: 1px solid #39414b; color: #d9e3ee; }
.track-top { height: 28px; flex: none; display: flex; align-items: center; padding: 0 4px 2px 3px; border-bottom: 1px solid #4e5762; }
.key, .keys button { height: 18px; border: 1px solid #2e3640; background: linear-gradient(#808a98, #5d6775); color: #d5deea; font-size: 11px; }
.key { border-radius: 3px; }
.grid-key { width: 24px; background: #56606c; }
.keys { display: flex; }
.keys button { min-width: 20px; font-weight: bold; }
.keys button + button { border-left: 0; }
.keys button:first-child { border-radius: 3px 0 0 3px; }
.keys button:last-child { border-radius: 0 3px 3px 0; }
.solo { margin-left: 7px; }
.marker { margin-left: auto; }
.marker button { min-width: 16px; }
.marker button:last-child { width: 52px; }
.strip { flex: 1; display: grid; grid-template-columns: 30px minmax(0, 1fr); grid-template-rows: 24px 26px; grid-auto-rows: 19px; background: linear-gradient(to right, #868f98 30px, #6c7883 30px); }
.side { display: flex; align-items: center; justify-content: center; }
.side .key { width: 24px; height: 15px; font-size: 10px; }
.fold { width: 12px; height: 11px; background: #eee; color: #222; font-size: 11px; line-height: 11px; }
.row { display: flex; align-items: center; justify-content: space-between; padding: 0 4px; }
.smr button { width: 19px; min-width: 19px; background: linear-gradient(#d3d8e2, #a9b1c0); color: #3c4858; }
.smr .rec { background: linear-gradient(135deg, #ff7a6a 30%, #f02318 50%); color: #fff; }
.track-name { width: 98px; height: 18px; padding: 0 3px 0 4px; gap: 15px; justify-content: flex-start; border: 1px solid #2e3640; border-radius: 3px; background: radial-gradient(#4c5562 1px, transparent 1px) 0 0 / 3px 3px, #626c79; color: #fff; }
.track-name svg, .io svg { margin-left: auto; }
.meter { flex: 1; height: 21px; display: flex; align-items: center; gap: 7px; padding-left: 8px; border: 1px solid #2b333d; border-radius: 2px; background: #3c4551; color: #aeb8c4; }
.scale { flex: 1; padding-right: 2px; }
.scale i { display: block; height: 9px; background: repeating-linear-gradient(to right, #6b7581 0 1px, transparent 1px 3px); }
.scale p { display: flex; justify-content: space-between; font-size: 9px; line-height: 9px; color: #b9c5d0; }
.key.wide { width: 26px; height: 15px; font-size: 10px; }
output { width: 26px; height: 14px; border: 1px solid #252d38; background: #353f4c; color: #c8f0f4; font-size: 9px; line-height: 12px; text-align: center; }
.fader { appearance: none; width: 84px; height: 15px; margin: 0; background: linear-gradient(#222a33, #222a33) 0 7px / 100% 1px no-repeat; }
.fader::-webkit-slider-thumb { appearance: none; width: 20px; height: 12px; background: linear-gradient(to right, #fff 0 3px, #aaa 3px 4px, #fff 4px 6px, #aaa 6px 7px, #fff 7px 9px, #222 9px 10px, #fff 10px 13px, #aaa 13px 14px, #fff 14px 16px, #aaa 16px 17px, #fff 17px); }
.pan { background: #656f80; border: 1px solid #4b5460; }
.pan::-webkit-slider-thumb { width: 6px; height: 13px; background: linear-gradient(to right, #3b4553 1px, transparent 1px 2px, #a2accc 2px 4px, transparent 4px 5px, #3b4553 5px); }
.io { flex: 1; height: 15px; justify-content: flex-start; border: 1px solid #2b333d; border-radius: 3px; background: linear-gradient(to right, #66707d 31px, #2b333e 31px); padding-right: 3px; color: #e4ebf4; }
.io span { width: 36px; padding-left: 5px; text-align: left; font-size: 10px; }
.io b { font: 8px/12px "Liberation Sans", sans-serif; color: #fff; }
.fx { flex: 1; height: 15px; justify-content: flex-start; padding-left: 3px; border: 1px solid #424b57; background: linear-gradient(#828c9c, #5f6978); font: 8px/12px "Liberation Sans", sans-serif; }
.track-foot { height: 40px; flex: none; display: flex; gap: 7px; padding: 4px 0 0 34px; border-top: 1px solid #1f262e; overflow: hidden; }
.track-foot > div { text-align: center; flex: none; }
.track-foot span { display: block; font-weight: bold; line-height: 17px; }
.nums button { min-width: 19px; }
.nums button:last-child { min-width: 18px; }

.arrange { position: relative; flex: 1; display: flex; flex-direction: column; background: #6c7883; }
.overview { height: 13px; flex: none; background: #a9acb3; border-bottom: 1px solid #555; }
.ruler { height: 15px; flex: none; display: flex; background: #cdd1d9; border-bottom: 2px solid #d8704a; overflow: hidden; }
.ruler span { width: 150px; flex: none; padding-left: 4px; line-height: 17px; height: 14px; background: linear-gradient(#111, #111) 0 8px / 1px 8px no-repeat; }
.ruler span:first-child { background: none; }
.lane { flex: 1; display: flex; min-height: 0; }
.view { flex: 1; display: flex; background: #9aa2ae; border-top: 1px solid #c9ccd4; border-bottom: 3px solid #d0704a; }
.clip { width: 368px; background: #c8cdd9; border-right: 1px solid #222; }
.vscroll { width: 18px; display: flex; flex-direction: column; padding: 1px 3px 0 3px; background: #2f3742; }
.thumb { height: 308px; border-radius: 2px; background: linear-gradient(to right, #9ba4b1, #cfd5dc); border-bottom: 5px double #bcc5ce; }
.grow { flex: 1; }
.vscroll button, .hscroll button { height: 18px; flex: none; background: #414a58; border: 1px solid #232b35; color: #fff; font-size: 13px; }
.vscroll button { margin: 0 -3px; }
.hscroll { height: 19px; flex: none; display: flex; justify-content: flex-end; margin-right: 17px; background: #3b4550; }
.hscroll button { width: 21px; }
.zoomrow { height: 21px; flex: none; display: flex; justify-content: flex-end; align-items: center; gap: 3px; padding-right: 16px; }
.zk { width: 43px; height: 15px; gap: 8px; border: 1px solid #39424d; border-radius: 3px; background: linear-gradient(#7f8996, #5d6875); color: #d8e3ee; font: 10px/10px "DejaVu Sans", sans-serif; }
.playhead { position: absolute; left: 431px; top: 20px; width: 9px; height: 128px; background: linear-gradient(#505560, #505560) 4px 6px / 1px 100% no-repeat; }

.scope { left: 169px; top: 186px; width: 944px; height: 464px; padding: 1px 10px 11px; border: 1px solid #1d3c44; box-shadow: inset 1px 1px #fff, inset -1px -1px #5cc8d8; background: linear-gradient(#9db9d6, #b8d0ea 40px, #b5cfe8); }
.scope-head { height: 32px; flex: none; display: grid; grid-template-columns: 1fr auto 1fr; align-items: start; line-height: 14px; padding-top: 7px; }
.scope-head h2 { color: #111; padding-left: 6px; }
.scope-menu { display: flex; gap: 3px; }
.scope-menu button { height: 19px; align-items: flex-start; background: #c0c0c0; border-right: 1px solid #555; }
.close { width: 17px; height: 17px; margin: 2px 0 0; justify-self: end; border: 1px solid #5a1620; border-radius: 2px; background: linear-gradient(#dc9488 45%, #b8392a 50%, #cc6450); box-shadow: inset 0 0 0 1px #e8b0a8; }
.plate { flex: 1; border: 1px solid #fff; outline: 1px solid #a8a8a8; background: #c0c0c0; margin-right: 1px; }
.plate svg { width: 100%; height: auto; shape-rendering: crispEdges; }
.db, .hz { font: 8px "DejaVu Sans", sans-serif; }
.hz { text-anchor: middle; }

.transport { left: 211px; top: 762px; width: 810px; height: 84px; flex-direction: row; border: 1px solid #000; background: linear-gradient(#dde2e8, #e0e4ec); z-index: 2; }
.t-left { width: 595px; flex: none; border-right: 2px solid #000; padding: 0 3px 5px 5px; display: flex; flex-direction: column; }
.t-head { height: 14px; flex: none; display: flex; align-items: center; gap: 12px; padding-right: 2px; }
.t-head h2 { flex: 1; font-weight: bold; font-size: 12px; color: #2c3c50; }
.t-body { display: flex; flex: 1; gap: 5px; }
.lcd { width: 178px; height: 62px; display: flex; margin-top: 1px; padding: 5px 4px 3px 6px; border-radius: 4px; border: 1px solid #5c6472; background: #262e42; color: #e6effc; justify-content: space-between; }
.lcd-main { width: 104px; }
.units { display: flex; justify-content: space-between; font-size: 8px; line-height: 12px; color: #9fc4e8; }
.time { font-size: 19px; line-height: 22px; white-space: nowrap; }
.le { display: flex; justify-content: space-between; line-height: 18px; font-family: "DejaVu Sans", sans-serif; }
.lcd-side { width: 54px; }
.lcd-side div { display: flex; justify-content: space-between; margin-top: 4px; }
.lcd-side button { height: 14px; width: 15px; border: 1px solid #141a28; border-radius: 2px; background: #4d566c; font-size: 10px; }
.lcd-side .smpte { width: 54px; font-size: 8px; gap: 2px; }
.deck { width: 304px; display: flex; flex-direction: column; gap: 4px; }
.deck-keys { display: flex; height: 28px; flex: none; border: 1px solid #3c4758; border-radius: 3px; overflow: hidden; background: linear-gradient(#75808f, #566273); fill: #c6d2de; }
.deck-keys button { width: 41px; position: relative; border-right: 1px solid #343f50; }
.deck-keys .big { width: 69px; }
.deck-keys button:last-child { border: 0; width: 41px; }
.notch::after { content: ""; position: absolute; right: 0; top: 0; width: 15px; height: 9px; border-left: 1px solid #343f50; border-bottom: 1px solid #343f50; background: #6c7888; }
.small::after { width: 11px; }
.deck-keys .small svg { margin-right: 8px; }
.scrub { appearance: none; width: 100%; height: 10px; margin: 0; background: linear-gradient(#7a818c, #7a818c) 0 4px / 100% 1px no-repeat; }
.scrub::-webkit-slider-thumb { appearance: none; width: 41px; height: 10px; border: 1px solid #2d3646; background: radial-gradient(#b0b4d0 1px, transparent 1px) 0 0 / 3px 3px, #777d9c; }
.marks { display: flex; gap: 3px; margin-top: 1px; }
.lt { height: 17px; border: 1px solid #4f5f78; border-radius: 2px; background: linear-gradient(#fbfcfe, #cdd3e2); color: #536176; font-weight: bold; font-size: 11px; }
.mk { width: 48px; height: 16px; }
.hot { background: linear-gradient(#7ba0f0, #2c6be8 50%, #4c90f8); color: #fff; border-color: #12265c; }
.seg { flex: 1; display: flex; height: 16px; border: 1px solid #4f6090; border-radius: 3px; background: linear-gradient(#fbfcfe, #cdd3e2); color: #5a6575; font-weight: bold; font-size: 10px; overflow: hidden; fill: #566578; }
.seg button { flex: 1; border-right: 1px solid #9aa4b8; }
.seg button:last-child { border-right: 0; }
.seg .in { flex: 0 0 20px; }
.seg .out { flex: 0 0 25px; }
.modes { flex: 1; display: grid; grid-template-columns: 47px 41px; grid-template-rows: 17px 18px 17px; gap: 5px; align-content: start; }
.span2 { grid-column: span 2; }
.combo { height: 17px; display: flex; align-items: center; border: 1px solid #596478; border-radius: 2px; background: linear-gradient(to left, #d3d8e4 12px, #f2f4fa 12px); overflow: hidden; }
.combo span { height: 100%; padding: 0 1px 0 2px; background: #232c40; color: #b8c8e0; font: 9px/15px "Liberation Sans", sans-serif; min-width: 20px; text-align: center; }
.combo select { flex: 1; min-width: 0; height: 100%; appearance: none; border: 0; border-right: 1px solid #8a94a8; border-radius: 0; margin: 0; padding: 0 0 0 2px; background: none; font: 9px/14px "DejaVu Sans", sans-serif; color: #3f4a5c; }
.combo::after { content: ""; width: 8px; height: 5px; margin: 0 2px; flex: none; background: #5b6678; clip-path: polygon(0 0, 100% 0, 50% 100%); }
.combo.meter-combo select { padding-left: 5px; }
.t-right { flex: 1; display: flex; gap: 6px; padding: 15px 3px 5px 4px; }
.midi { width: 82px; flex: none; display: flex; flex-direction: column; gap: 5px; }
.midi .combo { flex: none; }
.midi-lcd { flex: 1; display: grid; grid-template-columns: 1fr 1fr; text-align: center; border-radius: 4px; background: linear-gradient(#05060a 45%, #262e42 45%); align-items: center; color: #c3d4ea; font-size: 11px; margin-bottom: 1px; }
.midi-lcd span { color: #4b556b; font-weight: bold; }
.tempo { width: 71px; flex: none; display: grid; grid-template-columns: 40px 26px; grid-template-rows: 17px 18px 17px; gap: 5px; align-content: start; }
.jog { display: flex; flex-direction: column; align-items: center; gap: 6px; margin-top: -4px; flex: 1; }
.jk { width: 40px; height: 17px; flex: none; }

.dock { height: 27px; flex: none; display: flex; align-items: center; gap: 5px; padding: 0 0 0 12px; background: #efefef; border-top: 1px solid #fff; }
.tab { height: 19px; padding: 0 3px; border: 1px solid #fff; border-right: 2px solid #777; border-bottom: 2px solid #888; font-size: 13px; }
.down { border: 1px solid #777; border-top-width: 2px; border-right-color: #fff; border-bottom-color: #fff; background: #f8f8f8; padding: 0 4px; }
.tab:nth-child(3) { padding-left: 13px; width: 80px; justify-content: flex-start; }
.dock-tools { margin-left: auto; margin-right: 91px; }
.ov b { position: absolute; left: 0; right: 0; top: 2px; text-align: center; font-size: 16px; line-height: 12px; color: #1a1ab0; }
.thin b { font-weight: normal; font-size: 11px; left: 2px; line-height: 10px; }
.wav b { left: 8px; }

.status { height: 24px; flex: none; display: flex; gap: 2px; background: #efefef; border-top: 1px solid #999; padding-top: 1px; font: 14px/20px "Noto Sans", sans-serif; color: #222; box-shadow: inset 0 1px #fff; }
.status span { border: 1px solid #fff; border-top-color: #aaa; border-left-color: #aaa; padding-left: 1px; white-space: pre; }
.main { flex: 1; }
.status .cache { width: 180px; border-color: #fff #888 #888 #fff; padding-left: 25px; }
.trk { width: 160px; }

.taskbar { height: 47px; flex: none; display: flex; align-items: center; padding-left: 4px; border-top: 1px solid #3c4a5c; background: linear-gradient(to right, #7089a8 0, #8ba3c0 60px, #a2bcdc 110px, #a4bedd 960px, #8095b2 1010px, #7a90ae 100%); }
.taskbar > button { height: 46px; width: 70px; }
.taskbar .start { width: 58px; margin-right: 8px; }
.taskbar > button:nth-child(3) { width: 64px; }
.taskbar > button:nth-child(4) { width: 79px; }
.taskbar .active { width: 62px; border: 1px solid #4e6075; border-radius: 3px; background: linear-gradient(#dbe6f2, #c4d3e4); box-shadow: inset 0 0 0 1px #fff, 4px 0 0 -1px #c9d8ea, 5px 0 0 -1px #6d8098; }
.tray { margin-left: auto; display: flex; align-items: center; gap: 10px; }
.tray button:first-child { margin-right: 8px; }
.tray time { display: flex; flex-direction: column; align-items: center; width: 98px; color: #f2f5fa; font: 14px/22px "Open Sans", sans-serif; }
.taskbar .peek { width: 15px; margin-left: 2px; border: 1px solid #4a5a70; background: linear-gradient(110deg, #5d6f88, #8ea2ba 50%, #5f728c); }
```
